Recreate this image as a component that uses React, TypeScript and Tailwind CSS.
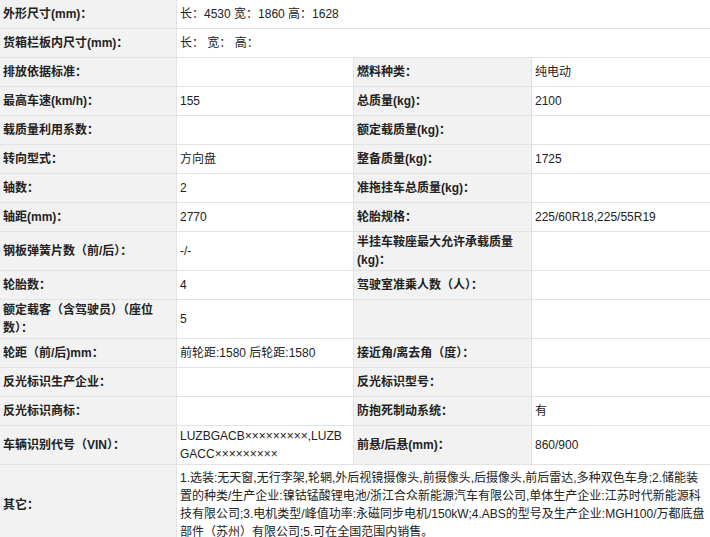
import React from "react";

type Row = [string, string] | [string, string, string, string];
const rows: Row[] = [
  ["外形尺寸(mm)：", "长：4530 宽：1860 高：1628"],
  ["货箱栏板内尺寸(mm)：", "长： 宽： 高："],
  ["排放依据标准：", "", "燃料种类：", "纯电动"],
  ["最高车速(km/h)：", "155", "总质量(kg)：", "2100"],
  ["载质量利用系数：", "", "额定载质量(kg)：", ""],
  ["转向型式：", "方向盘", "整备质量(kg)：", "1725"],
  ["轴数：", "2", "准拖挂车总质量(kg)：", ""],
  ["轴距(mm)：", "2770", "轮胎规格：", "225/60R18,225/55R19"],
  ["钢板弹簧片数（前/后）：", "-/-", "半挂车鞍座最大允许承载质量(kg)：", ""],
  ["轮胎数：", "4", "驾驶室准乘人数（人）：", ""],
  ["额定载客（含驾驶员）（座位数）：", "5", "", ""],
  ["轮距（前/后)mm：", "前轮距:1580 后轮距:1580", "接近角/离去角（度）：", ""],
  ["反光标识生产企业：", "", "反光标识型号：", ""],
  ["反光标识商标：", "", "防抱死制动系统：", "有"],
  ["车辆识别代号（VIN）：", "LUZBGACB×××××××××,LUZBGACC×××××××××", "前悬/后悬(mm)：", "860/900"],
  ["其它：", "1.选装:无天窗,无行李架,轮辋,外后视镜摄像头,前摄像头,后摄像头,前后雷达,多种双色车身;2.储能装置的种类/生产企业:镍钴锰酸锂电池/浙江合众新能源汽车有限公司,单体生产企业:江苏时代新能源科技有限公司;3.电机类型/峰值功率:永磁同步电机/150kW;4.ABS的型号及生产企业:MGH100/万都底盘部件（苏州）有限公司;5.可在全国范围内销售。"],
];

const lab = "bg-[#f2f2f2] font-bold px-[3px] py-[1px] align-middle border border-[#e3e3e3]";
const val = "bg-white px-[3px] py-[1px] align-middle border border-[#e3e3e3] break-all";

export default function App() {
  return (
    <div className="w-[710px] h-[537px] overflow-hidden bg-white text-[12px] leading-[18px] text-[#222]" style={{ fontFamily: '"Liberation Sans","Noto Sans CJK SC",sans-serif' }}>
      <table className="border-collapse table-fixed w-[712px] -ml-px -mt-px">
        <colgroup>
          <col className="w-[177px]" />
          <col className="w-[177px]" />
          <col className="w-[178px]" />
          <col className="w-[180px]" />
        </colgroup>
        <tbody>
          {rows.map((r, i) => (
            <tr key={i} className={i === 15 ? "h-[80px]" : "h-[29px]"}>
              <td className={lab}>{r[0]}</td>
              {r.length === 2 ? (
                <td className={val} colSpan={3}>{r[1]}</td>
              ) : (
                <>
                  <td className={val}>{r[1]}</td>
                  <td className={lab}>{r[2]}</td>
                  <td className={val}>{r[3]}</td>
                </>
              )}
            </tr>
          ))}
        </tbody>
      </table>
    </div>
  );
}
